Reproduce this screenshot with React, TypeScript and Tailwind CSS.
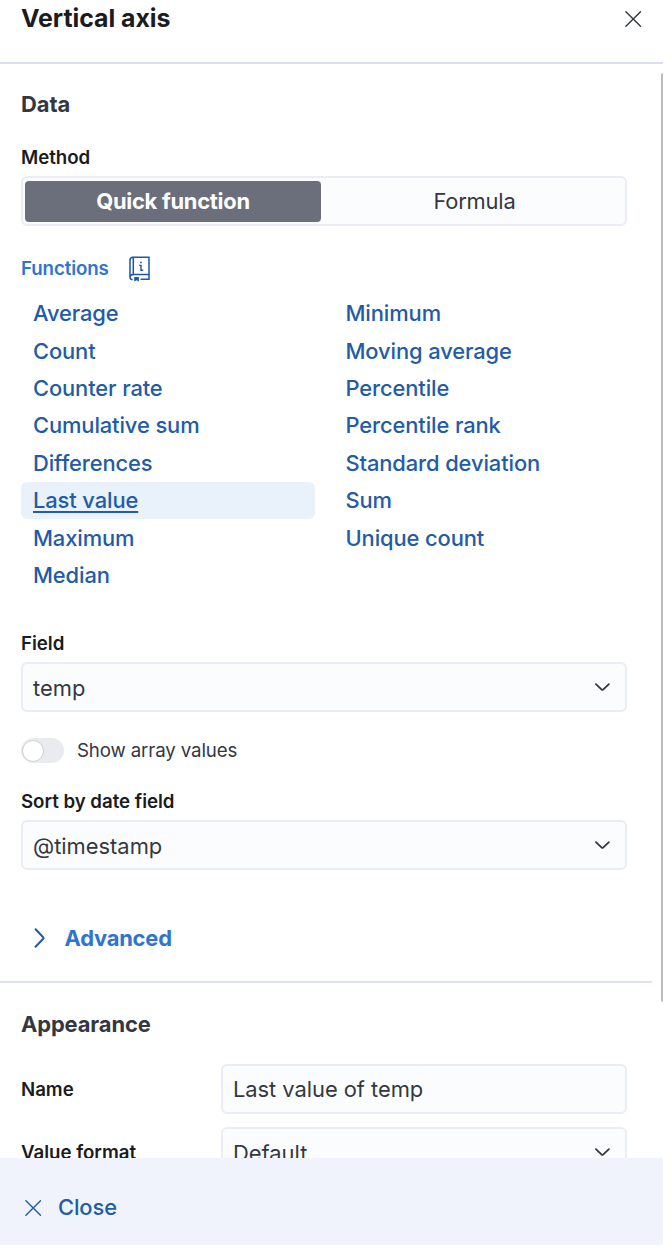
import React from "react";

type IconProps = { className?: string };

const functions: string[] = [
  "Average", "Count", "Counter rate", "Cumulative sum", "Differences", "Last value", "Maximum", "Median",
  "Minimum", "Moving average", "Percentile", "Percentile rank", "Standard deviation", "Sum", "Unique count",
];

function Cross({ className }: IconProps) {
  return (
    <svg viewBox="0 0 18 18" fill="none" stroke="currentColor" strokeWidth="1.4" strokeLinecap="round" className={className}>
      <path d="M1.9 1.7 16.5 16.3M16.5 1.7 1.9 16.3" />
    </svg>
  );
}

function ChevronDown({ className }: IconProps) {
  return (
    <svg viewBox="0 0 16 10" fill="none" stroke="currentColor" strokeWidth="1.8" strokeLinecap="round" strokeLinejoin="round" className={className}>
      <path d="M1.9 2.1 7.7 7.6Q8.4 8.2 9.1 7.6L14.9 2.1" />
    </svg>
  );
}

function BookInfo({ className }: IconProps) {
  return (
    <svg viewBox="0 0 22 26" fill="none" stroke="currentColor" strokeWidth="1.5" className={className}>
      <path d="M4.3 1.3H20V18.6H4.3Z" />
      <path d="M4.3 1.3C2 1.3 1 2.3 1 4.2V21.2C1 22.8 1.8 23.6 3.6 23.6M1 21.2C1 19.5 2 18.6 4.3 18.6M20 18.6V23.2H11.6" />
      <path d="M5.2 21H9.9V25.6L7.6 24.2 5.2 25.6Z" fill="currentColor" stroke="none" />
      <path d="M10.1 9.4H12V14.2H14.2" strokeWidth="1.4" />
      <path d="M11.1 6.5H12.8" strokeWidth="1.6" />
    </svg>
  );
}

function Label({ children, className = "" }: { children: React.ReactNode; className?: string }) {
  return <div className={`h-6 pt-[0.6px] text-[18.7px] leading-6 font-semibold tracking-[-0.03px] text-[#1a1c21] ${className}`}>{children}</div>;
}

function Select({ value, className = "" }: { value: string; className?: string }) {
  return (
    <div className={`flex h-[50px] items-center justify-between rounded-[6px] border-2 border-[#ebedf5] bg-[#fbfcfe] pr-[15px] pl-[10px] text-[21.9px] text-[#343741] ${className}`}>
      <span className="pt-[3px]">{value}</span>
      <ChevronDown className="h-[10px] w-[16px]" />
    </div>
  );
}

export default function App() {
  return (
    <div className="h-[1258px] w-[672px] bg-white font-['Inter',sans-serif]">
      <div className="relative flex h-[1245px] w-[663px] flex-col overflow-hidden bg-white">
        <header className="flex h-16 shrink-0 items-start justify-between border-b-2 border-[#d9dfec] pr-[21px] pl-[21px]">
          <h1 className="pt-[2px] text-[24.9px] leading-8 font-bold tracking-[-0.04px] text-[#1a1c21]">Vertical axis</h1>
          <Cross className="mt-[9.5px] h-[18px] w-[18px] text-[#343741]" />
        </header>

        <main className="min-h-0 flex-1 overflow-hidden">
          <section className="mr-[11px] h-[919px] border-b-2 border-[#dde2ee] pt-[25px] pr-[25px] pl-[21px]">
            <h2 className="h-[30px] text-[21.9px] leading-[30px] font-bold tracking-[-0.05px] text-[#343741]">Data</h2>
            <Label className="mt-[26px]">Method</Label>
            <div className="mt-[7px] flex h-[50px] rounded-[6px] border-2 border-[#ebedf5] bg-[#fbfcfe] p-[2px] text-[21.9px]">
              <div className="my-[0.5px] flex w-[296px] items-center justify-center rounded-[4px] bg-[#6a6f7b] font-bold tracking-[-0.25px] text-white">Quick function</div>
              <div className="flex flex-1 items-center justify-center pl-[5px] tracking-[-0.2px] text-[#343741]">Formula</div>
            </div>

            <div className="mt-[30px] flex h-[26px] items-center">
              <span className="w-[107.5px] pt-[1px] text-[18.7px] font-semibold tracking-[-0.1px] text-[#2f74ce]">Functions</span>
              <BookInfo className="h-[26px] w-[22px] text-[#1f57a4]" />
            </div>

            <div className="mt-[13px] grid h-[300px] grid-flow-col grid-cols-[294px_294px] grid-rows-[repeat(8,37.4px)] gap-x-[18.5px]">
              {functions.map((name) => (
                <div
                  key={name}
                  className={`flex items-center rounded-[6px] pl-[12px] text-[21.9px] font-medium tracking-[-0.11px] text-[#225ba6] ${
                    name === "Last value" ? "bg-[#e9f1fa] underline decoration-[1.5px] underline-offset-[3px]" : ""
                  }`}
                >
                  {name}
                </div>
              ))}
            </div>

            <Label className="mt-[36px]">Field</Label>
            <Select value="temp" className="mt-[7px]" />

            <div className="mt-[26px] flex h-[25px] items-center">
              <div className="flex h-[25px] w-[43px] items-center rounded-full bg-[#e9ebef] pl-[1px]">
                <div className="h-[22px] w-[22px] rounded-full border-[1.5px] border-[#cdcfd4] bg-white" />
              </div>
              <span className="ml-[13px] pt-[1px] text-[18.7px] tracking-[-0.14px] text-[#343741]">Show array values</span>
            </div>

            <Label className="mt-[26px]">Sort by date field</Label>
            <Select value="@timestamp" className="mt-[6.5px]" />

            <div className="mt-[53.5px] flex h-[30px] items-center pl-[12px]">
              <svg viewBox="0 0 12 20" fill="none" stroke="currentColor" strokeWidth="2" strokeLinecap="round" strokeLinejoin="round" className="h-[20px] w-[12px] text-[#225ba6]">
                <path d="M2.6 1.2 10.2 9.3Q10.8 10 10.2 10.7L2.6 18.8" />
              </svg>
              <span className="ml-[19.5px] text-[21.9px] font-bold tracking-[-0.2px] text-[#2f74ce]">Advanced</span>
            </div>
          </section>

          <section className="pt-[25.5px] pr-[36px] pl-[21px]">
            <h2 className="h-[30px] text-[21.9px] leading-[30px] font-bold tracking-[-0.12px] text-[#343741]">Appearance</h2>
            <div className="mt-[25.5px] flex items-center">
              <Label className="w-[200px]">Name</Label>
              <div className="flex h-[50px] flex-1 items-center rounded-[6px] border-2 border-[#ebedf5] bg-[#fbfcfe] pl-[10px] text-[21.9px] tracking-[-0.04px] text-[#343741]">
                Last value of temp
              </div>
            </div>
            <div className="mt-[13px] flex items-center">
              <Label className="w-[200px]">Value format</Label>
              <Select value="Default" className="flex-1" />
            </div>
          </section>
        </main>

        <footer className="flex h-[87px] shrink-0 items-center bg-[#f0f3fb] pt-[12px] pl-[24px] text-[#225ba6]">
          <Cross className="h-[18px] w-[18px]" />
          <span className="ml-[16px] text-[21.9px] font-medium tracking-[-0.11px]">Close</span>
        </footer>

        <div className="absolute top-[73px] right-0 h-[929px] w-[2px] rounded-l-sm bg-[#b9bdc2]" />
      </div>
    </div>
  );
}
